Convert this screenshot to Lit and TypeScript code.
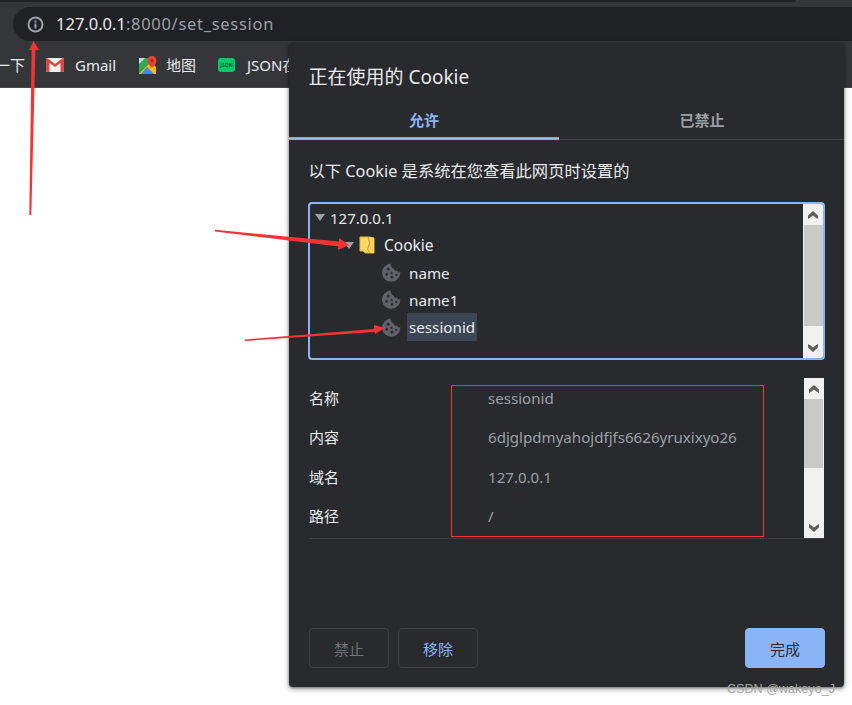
import { LitElement, html, css, svg } from "lit";
import { customElement } from "lit/decorators.js";

const cookie = html`<svg class="cookie" viewBox="0 0 20 20" width="19" height="19"><path fill="#5f6368" d="M9 .6a9.6 9.6 0 1 0 10.3 9.2c-1.5.5-2.8-.3-3.2-1.7-1.6.5-3.3-.4-3.6-2.1C10.600 5.800 9 3 9 .6z"/><g fill="#292a2d"><circle cx="6.500" cy="6.500" r="1.500"/><circle cx="5" cy="12" r="1.400"/><circle cx="10" cy="10.500" r="1.200"/><circle cx="10.500" cy="15" r="1.500"/><circle cx="15" cy="12.500" r="1.100"/></g></svg>`;

const up = html`<svg viewBox="0 0 10 8" width="10" height="8"><path fill="#5f5f5f" d="M5 0 10 4.500V8L7.500 6.500 5 4.500 2.500 6.500 0 8V4.500z"/></svg>`;
const down = html`<svg viewBox="0 0 10 8" width="10" height="8"><path fill="#5f5f5f" d="M5 8 10 3.500V0L7.500 1.500 5 3.500 2.500 1.500 0 0V3.500z"/></svg>`;

@customElement("app-root")
export class AppRoot extends LitElement {
  static styles = css`
    :host { display: block; position: relative; width: 852px; height: 705px; overflow: hidden; background: #fff;
      font-family: "Noto Sans", "Noto Sans CJK SC", sans-serif; font-size: 14px; color: #e8eaed; }
    .chrome { background: #35363a; height: 87px; display: flex; flex-direction: column; border-bottom: 1px solid #45464a; }
    .strip { height: 2px; width: 796px; background: #202124; border-radius: 0 0 6px 0; flex: none; }
    .toolbar { height: 41px; flex: none; padding: 5px 0 0 13px; box-sizing: border-box; }
    .omni { height: 34px; background: #202124; border-radius: 17px 0 0 17px; display: flex; align-items: center; padding-left: 14px; gap: 12px; }
    .info { flex: none; }
    .url { font-size: 16.500px; line-height: 22px; color: #9aa0a6; letter-spacing: .7px; }
    .url b { font-weight: 400; color: #e8eaed; letter-spacing: 0; }
    .bookmarks { height: 44px; display: flex; align-items: center; font-size: 15px; line-height: 20px; overflow: hidden; box-sizing: border-box; }
    .bm { display: flex; align-items: center; gap: 11px; flex: none; }
    .bm1 { margin-left: -5px; width: 51px; }
    .bm2 { width: 93px; }
    .bm3 { width: 79px; gap: 9px; }
    .bm4 { gap: 12px; }
    .json { width: 17px; height: 14px; border-radius: 3px; background: #0cc768; color: #0b5a33; font-size: 5px; line-height: 14px; text-align: center; overflow: hidden; font-weight: 700; }
    .dialog { position: absolute; left: 289px; top: 43px; width: 555px; height: 644px; background: #292a2d; border-radius: 4px;
      box-shadow: 0 1px 3px rgba(0,0,0,.45), 0 2px 6px rgba(0,0,0,.3); display: flex; flex-direction: column; }
    h1 { margin: 0; padding: 21px 19.500px 0; height: 60px; box-sizing: border-box; font-weight: 400; font-size: 19px; line-height: 26px; color: #e8eaed; }
    .tabs { display: flex; height: 37px; border-bottom: 1px solid #3c4043; box-sizing: border-box; }
    .tab { width: 270px; flex: none; text-align: center; font-size: 15px; line-height: 20px; font-weight: 700; color: #9aa0a6; padding-top: 7px; box-sizing: border-box; height: 37px; }
    .tab.on { color: #8ab4f8; border-bottom: 3px solid #8ab4f8; }
    .tab.off { flex: 1; padding-left: 1px; }
    .desc { margin: 0; padding: 21px 19.500px 0; height: 62px; box-sizing: border-box; line-height: 20px; font-size: 16.300px; white-space: nowrap; }
    .treebox { margin-left: 19px; width: 517px; height: 158px; border: 2px solid #8ab4f8; border-radius: 4px; box-sizing: border-box; display: flex; }
    .tree { flex: 1; }
    .row { display: flex; align-items: center; height: 27.200px; font-size: 15px; }
    .tri { width: 0; height: 0; border-left: 5px solid transparent; border-right: 5px solid transparent; border-top: 7px solid #9aa0a6; flex: none; }
    .r0 { padding-left: 5px; gap: 5px; }
    .r1 { padding-left: 34px; gap: 5px; height: 28px; }
    .folder { margin-right: 2px; flex: none; }
    .r1 .label { font-size: 15.500px; }
    .r2 { padding-left: 72px; gap: 6px; }
    .r2 .label { font-size: 15.200px; }
    .label { padding: 0 2px; line-height: 28px; }
    .sel { background: #3b4554; }
    .bar { flex: none; width: 20px; background: #f1f1f1; display: flex; flex-direction: column; align-items: center; }
    .thumb { align-self: stretch; background: #c9c9c9; flex: none; }
    .rest { flex: 1; }
    .tree-bar { border-radius: 0 2px 2px 0; }
    .arrow { height: 21px; display: flex; align-items: center; justify-content: center; flex: none; }
    .tree-bar .thumb { height: 101px; margin-left: 1px; }
    .details { margin: 18px 0 0 20px; width: 515px; height: 161px; display: flex; position: relative; border-bottom: 1px solid #3c4043; box-sizing: border-box; }
    .dl { flex: 1; display: grid; grid-template-columns: 179px 1fr; grid-auto-rows: 39.400px; align-content: start; }
    .k { font-size: 15px; line-height: 40px; color: #e8eaed; }
    .v { font-size: 15.100px; line-height: 40px; color: #9aa0a6; white-space: nowrap; }
    .dl-bar .thumb { height: 69px; margin-right: 1px; }
    .redbox { position: absolute; left: 142px; top: 7px; width: 311px; height: 150px; border: 1px solid #f03a3a; pointer-events: none; }
    .buttons { margin-top: auto; padding: 0 19px 19px 20px; display: flex; gap: 9px; }
    button { font: inherit; font-size: 15px; height: 40px; width: 80px; border-radius: 4px; border: 1px solid #3c4043; background: transparent; color: #8ab4f8; padding: 0; }
    button.dis { color: #6f7275; }
    button.done { margin-left: auto; background: #8ab4f8; border-color: #8ab4f8; color: #292a2d; }
    .arrows { position: absolute; left: 0; top: 0; pointer-events: none; }
    .mark { position: absolute; left: 727px; top: 681px; font-family: "Liberation Sans", sans-serif; font-size: 12.600px; line-height: 16px; color: #a8a8a8; white-space: nowrap; }
  `;

  render() {
    return html`
      <div class="chrome">
        <div class="strip"></div>
        <div class="toolbar">
          <div class="omni">
            <svg class="info" viewBox="0 0 17 17" width="17" height="17"><circle cx="8.500" cy="8.500" r="7" fill="none" stroke="#9aa0a6" stroke-width="2"/><rect x="7.500" y="7.500" width="2" height="5" fill="#9aa0a6"/><rect x="7.500" y="4.500" width="2" height="2" fill="#9aa0a6"/></svg>
            <span class="url"><b>127.0.0.1</b>:8000/set_session</span>
          </div>
        </div>
        <div class="bookmarks">
          <div class="bm bm1"><span>一下</span></div>
          <div class="bm bm2">
            <svg viewBox="0 0 18 14" width="18" height="14"><rect width="18" height="14" rx="1.500" fill="#f1efec"/><path d="M0 1.500C0 .5 1 0 2 .5L9 6 16 .5c1-.5 2 0 2 1V12.500a1.500 1.500 0 0 1-1.500 1.500H14.500V5L9 9 3.500 5V14H1.500A1.500 1.500 0 0 1 0 12.500z" fill="#d64c42"/></svg>
            <span>Gmail</span>
          </div>
          <div class="bm bm3">
            <svg viewBox="0 0 18 18" width="18" height="18"><path d="M0 2h12v16H0z" fill="#34a853"/><path d="M0 18 12 6l5 5v7z" fill="#fbbc04"/><path d="M2 18 8 11l7 7z" fill="#4285f4"/><path d="M0 2h6L0 8z" fill="#c6dafc"/><path d="M13 0a4.500 4.500 0 0 1 4.500 4.500C17.500 8 13 12 13 12S8.500 8 8.500 4.500A4.500 4.500 0 0 1 13 0z" fill="#ea4335"/><circle cx="13" cy="4.500" r="1.500" fill="#a52714"/></svg>
            <span>地图</span>
          </div>
          <div class="bm bm4">
            <div class="json">JSON</div>
            <span>JSON在线</span>
          </div>
        </div>
      </div>

      <div class="dialog">
        <h1>正在使用的 Cookie</h1>
        <div class="tabs">
          <div class="tab on">允许</div>
          <div class="tab off">已禁止</div>
        </div>
        <p class="desc">以下 Cookie 是系统在您查看此网页时设置的</p>
        <div class="treebox">
          <div class="tree">
            <div class="row r0"><span class="tri"></span><span>127.0.0.1</span></div>
            <div class="row r1"><span class="tri"></span>
              <svg class="folder" viewBox="0 0 16 18" width="16" height="18"><path d="M1 1h9l5 1v15H6.500L4 15H1z" fill="#fdd663" stroke="#e6b53f" stroke-width="1"/><path d="M10.500 7.500l-2 6L11 17h4V2l-5-1z" fill="#fbd25a"/><path d="M9.500 1.500l1 6-2 6 2.500 3.500" fill="none" stroke="#c99a2e"/></svg>
              <span class="label">Cookie</span></div>
            <div class="row r2">${cookie}<span class="label">name</span></div>
            <div class="row r2">${cookie}<span class="label">name1</span></div>
            <div class="row r2">${cookie}<span class="label sel">sessionid</span></div>
          </div>
          <div class="bar tree-bar">
            <div class="arrow">${up}</div>
            <div class="thumb"></div>
            <div class="rest"></div>
            <div class="arrow">${down}</div>
          </div>
        </div>
        <div class="details">
          <div class="dl">
            <div class="k">名称</div><div class="v">sessionid</div>
            <div class="k">内容</div><div class="v">6djglpdmyahojdfjfs6626yruxixyo26</div>
            <div class="k">域名</div><div class="v">127.0.0.1</div>
            <div class="k">路径</div><div class="v">/</div>
          </div>
          <div class="bar dl-bar">
            <div class="arrow">${up}</div>
            <div class="thumb"></div>
            <div class="rest"></div>
            <div class="arrow">${down}</div>
          </div>
          <div class="redbox"></div>
        </div>
        <div class="buttons">
          <button class="dis">禁止</button>
          <button>移除</button>
          <button class="done">完成</button>
        </div>
      </div>

      <svg class="arrows" width="852" height="705" viewBox="0 0 852 705">
        ${svg`
          <g fill="#f53333" stroke="none">
            <path d="M29.300 215 31.600 50 29 50 33.500 41 39 50 35.400 50 31.300 215z"/>
            <path d="M215 229.800 339 241.500 339 238 349 245 338 250 338.500 246.500 215 231.500z"/>
            <path d="M245 339.500 374 329 374 325 385 328 375 334 374.500 332 245 341z"/>
          </g>
        `}
      </svg>
      <div class="mark">CSDN @wakeyo_J</div>
    `;
  }
}
